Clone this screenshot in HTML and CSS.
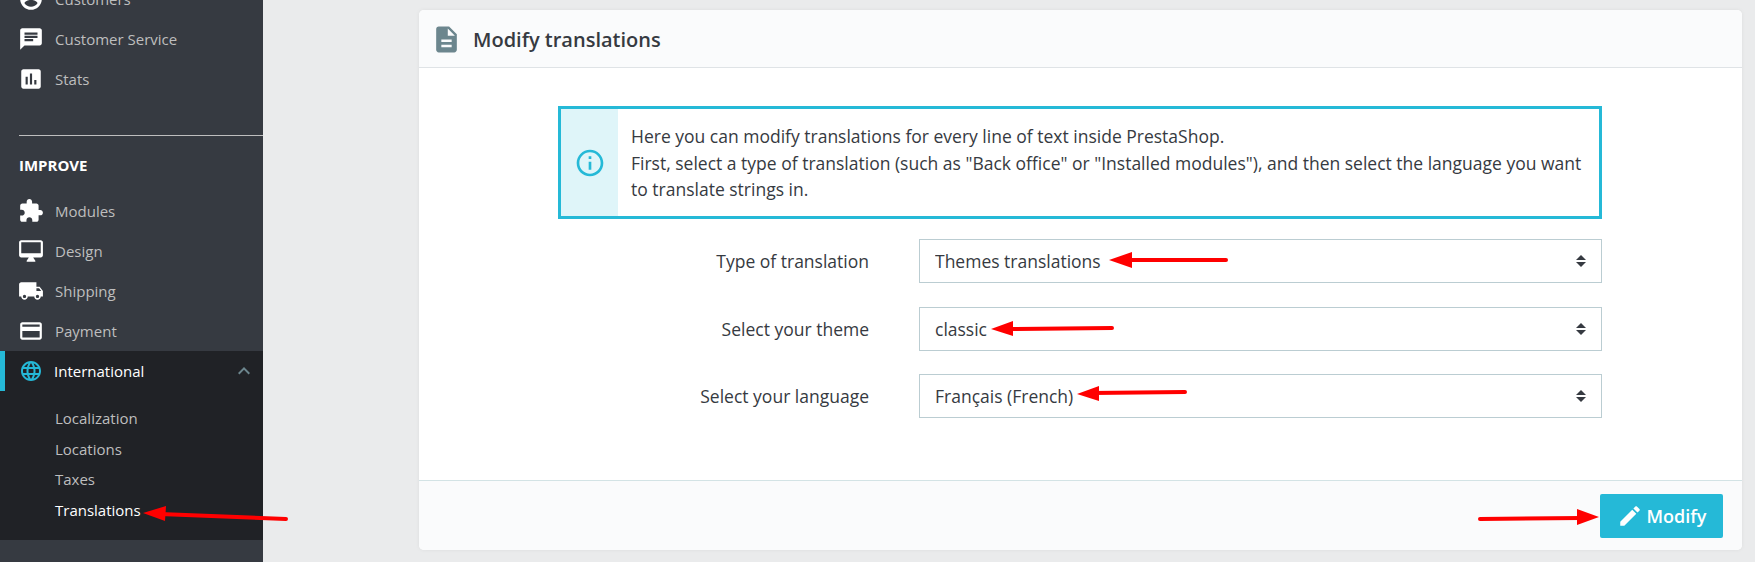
FILE: index.html
```html
<!DOCTYPE html>
<html lang="en">

<head>
    <meta charset="UTF-8">
    <meta name="viewport" content="width=device-width, initial-scale=1.0">
    <title>Modify translations</title>
    <link rel="stylesheet" href="styles.css">
</head>

<body>
    <div class="page">
        <nav class="sidebar">
            <ul class="menu">
                <li class="menu-item">
                    <svg class="menu-icon" viewBox="0 0 24 24"><path d="M12 2C6.48 2 2 6.48 2 12s4.48 10 10 10 10-4.48 10-10S17.52 2 12 2zm0 3c1.66 0 3 1.34 3 3s-1.34 3-3 3-3-1.34-3-3 1.34-3 3-3zm0 14.2c-2.5 0-4.71-1.28-6-3.22.03-1.99 4-3.08 6-3.08 1.99 0 5.97 1.09 6 3.08-1.29 1.94-3.5 3.22-6 3.22z"/></svg>
                    Customers
                </li>
                <li class="menu-item">
                    <svg class="menu-icon" viewBox="0 0 24 24"><path d="M20 2H4c-1.1 0-1.99.9-1.99 2L2 22l4-4h14c1.1 0 2-.9 2-2V4c0-1.1-.9-2-2-2zM6 9h12v2H6V9zm8 5H6v-2h8v2zm4-6H6V6h12v2z"/></svg>
                    Customer Service
                </li>
                <li class="menu-item">
                    <svg class="menu-icon" viewBox="0 0 24 24"><path d="M19 3H5c-1.1 0-2 .9-2 2v14c0 1.1.9 2 2 2h14c1.1 0 2-.9 2-2V5c0-1.1-.9-2-2-2zM9 17H7v-7h2v7zm4 0h-2V7h2v10zm4 0h-2v-4h2v4z"/></svg>
                    Stats
                </li>
            </ul>

            <div class="menu-section">IMPROVE</div>

            <ul class="menu">
                <li class="menu-item">
                    <svg class="menu-icon" viewBox="0 0 24 24"><path d="M20.5 11H19V7c0-1.1-.9-2-2-2h-4V3.5C13 2.12 11.88 1 10.5 1S8 2.12 8 3.5V5H4c-1.1 0-1.99.9-1.99 2v3.8H3.5c1.49 0 2.7 1.21 2.7 2.7s-1.21 2.7-2.7 2.7H2V20c0 1.1.9 2 2 2h3.8v-1.5c0-1.49 1.21-2.7 2.7-2.7 1.49 0 2.7 1.21 2.7 2.7V22H17c1.1 0 2-.9 2-2v-4h1.5c1.38 0 2.5-1.12 2.5-2.5S21.88 11 20.5 11z"/></svg>
                    Modules
                </li>
                <li class="menu-item">
                    <svg class="menu-icon" viewBox="0 0 24 24"><path d="M21 2H3c-1.1 0-2 .9-2 2v12c0 1.1.9 2 2 2h7l-2 3v1h8v-1l-2-3h7c1.1 0 2-.9 2-2V4c0-1.1-.9-2-2-2zm0 12H3V4h18v10z"/></svg>
                    Design
                </li>
                <li class="menu-item">
                    <svg class="menu-icon" viewBox="0 0 24 24"><path d="M20 8h-3V4H3c-1.1 0-2 .9-2 2v11h2c0 1.66 1.34 3 3 3s3-1.34 3-3h6c0 1.66 1.34 3 3 3s3-1.34 3-3h2v-5l-3-4zM6 18.5c-.83 0-1.5-.67-1.5-1.5s.67-1.5 1.5-1.5 1.5.67 1.5 1.5-.67 1.5-1.5 1.5zm13.5-9l1.96 2.5H17V9.5h2.5zm-1.5 9c-.83 0-1.5-.67-1.5-1.5s.67-1.5 1.5-1.5 1.5.67 1.5 1.5-.67 1.5-1.5 1.5z"/></svg>
                    Shipping
                </li>
                <li class="menu-item">
                    <svg class="menu-icon" viewBox="0 0 24 24"><path d="M20 4H4c-1.11 0-1.99.89-1.99 2L2 18c0 1.11.89 2 2 2h16c1.11 0 2-.89 2-2V6c0-1.11-.89-2-2-2zm0 14H4v-6h16v6zm0-10H4V6h16v2z"/></svg>
                    Payment
                </li>
                <li class="menu-item active">
                    <svg class="menu-icon" viewBox="0 0 24 24"><path d="M11.99 2C6.47 2 2 6.48 2 12s4.47 10 9.99 10C17.52 22 22 17.52 22 12S17.52 2 11.99 2zm6.93 6h-2.95c-.32-1.25-.78-2.45-1.38-3.56 1.84.63 3.37 1.91 4.33 3.56zM12 4.04c.83 1.2 1.48 2.53 1.91 3.96h-3.82c.43-1.43 1.08-2.76 1.91-3.96zM4.26 14C4.1 13.36 4 12.69 4 12s.1-1.36.26-2h3.38c-.08.66-.14 1.32-.14 2 0 .68.06 1.34.14 2H4.26zm.82 2h2.95c.32 1.25.78 2.45 1.38 3.56-1.84-.63-3.37-1.9-4.33-3.56zm2.95-8H5.08c.96-1.66 2.49-2.93 4.33-3.56C8.81 5.55 8.35 6.75 8.03 8zM12 19.96c-.83-1.2-1.48-2.53-1.91-3.96h3.82c-.43 1.43-1.08 2.76-1.91 3.96zM14.34 14H9.66c-.09-.66-.16-1.32-.16-2 0-.68.07-1.35.16-2h4.68c.09.65.16 1.32.16 2 0 .68-.07 1.34-.16 2zm.25 5.56c.6-1.11 1.06-2.31 1.38-3.56h2.95c-.96 1.65-2.49 2.93-4.33 3.56zM16.36 14c.08-.66.14-1.32.14-2 0-.68-.06-1.34-.14-2h3.38c.16.64.26 1.31.26 2s-.1 1.36-.26 2h-3.38z"/></svg>
                    International
                    <svg class="menu-caret" viewBox="0 0 24 24"><path d="M12 8l-6 6 1.41 1.41L12 10.83l4.59 4.58L18 14z"/></svg>
                </li>
            </ul>

            <ul class="submenu">
                <li>Localization</li>
                <li>Locations</li>
                <li>Taxes</li>
                <li class="current">Translations</li>
            </ul>
        </nav>

        <main class="content">
            <section class="card">
                <header class="card-header">
                    <svg class="card-icon" viewBox="0 0 24 24"><path d="M14 2H6c-1.1 0-1.99.9-1.99 2L4 20c0 1.1.89 2 1.99 2H18c1.1 0 2-.9 2-2V8l-6-6zm2 16H8v-2h8v2zm0-4H8v-2h8v2zm-3-5V3.5L18.5 9H13z"/></svg>
                    <h3>Modify translations</h3>
                </header>

                <div class="card-body">
                    <div class="alert">
                        <div class="alert-icon">
                            <svg viewBox="0 0 24 24"><path d="M11 7h2v2h-2zm0 4h2v6h-2zm1-9C6.48 2 2 6.48 2 12s4.48 10 10 10 10-4.48 10-10S17.52 2 12 2zm0 18c-4.41 0-8-3.59-8-8s3.59-8 8-8 8 3.59 8 8-3.59 8-8 8z"/></svg>
                        </div>
                        <p>Here you can modify translations for every line of text inside PrestaShop.<br>
                            First, select a type of translation (such as "Back office" or "Installed modules"), and then select the language you want to translate strings in.</p>
                    </div>

                    <div class="form-group">
                        <label for="type">Type of translation</label>
                        <div class="select-wrap">
                            <select id="type">
                                <option>Themes translations</option>
                            </select>
                        </div>
                    </div>

                    <div class="form-group">
                        <label for="theme">Select your theme</label>
                        <div class="select-wrap">
                            <select id="theme">
                                <option>classic</option>
                            </select>
                        </div>
                    </div>

                    <div class="form-group">
                        <label for="language">Select your language</label>
                        <div class="select-wrap">
                            <select id="language">
                                <option>Français (French)</option>
                            </select>
                        </div>
                    </div>
                </div>

                <footer class="card-footer">
                    <button type="button">
                        <svg viewBox="0 0 24 24"><path d="M3 17.25V21h3.75L17.81 9.94l-3.75-3.75L3 17.25zM20.71 7.04c.39-.39.39-1.02 0-1.41l-2.34-2.34c-.39-.39-1.02-.39-1.41 0l-1.83 1.83 3.75 3.75 1.83-1.83z"/></svg>
                        Modify
                    </button>
                </footer>
            </section>
        </main>

        <!-- red arrows drawn on top of the screenshot -->
        <svg class="arrows" viewBox="0 0 1755 562">
            <path class="arrow-line" d="M286 519 L160 514"/>
            <path class="arrow-head" d="M143 513 L166 506 L165 521 Z"/>
            <path class="arrow-line" d="M1226 260 L1125 260"/>
            <path class="arrow-head" d="M1109 260 L1132 252 L1132 268 Z"/>
            <path class="arrow-line" d="M1112 328 L1006 329"/>
            <path class="arrow-head" d="M991 329 L1013 321 L1013 336 Z"/>
            <path class="arrow-line" d="M1185 392 L1092 393"/>
            <path class="arrow-head" d="M1077 394 L1099 386 L1099 401 Z"/>
            <path class="arrow-line" d="M1480 519 L1581 518"/>
            <path class="arrow-head" d="M1599 517 L1577 509 L1577 525 Z"/>
        </svg>
    </div>
</body>

</html>
```

FILE: styles.css
```css
* {
    box-sizing: border-box;
}

html,
body {
    margin: 0;
    height: 100%;
    overflow: hidden;
}

body {
    font-family: "Open Sans", sans-serif;
    font-size: 17.5px;
    color: #363a41;
    background: #eaebec;
}

ul {
    list-style: none;
    margin: 0;
    padding: 0;
}

.page {
    position: relative;
    display: flex;
    height: 562px;
}

/* sidebar */
.sidebar {
    flex: 0 0 263px;
    height: 562px;
    overflow: hidden;
    background: #363a41;
    font-size: 15px;
    color: #bebebe;
}

.menu:first-child {
    margin-top: -21px;
}

.menu-item {
    display: flex;
    align-items: center;
    gap: 11px;
    height: 40px;
    padding-left: 18px;
}

.menu-icon {
    width: 26px;
    height: 26px;
    flex: none;
    fill: #fff;
}

.menu-section {
    margin: 36px 0 0 19px;
    padding: 18px 0 15px;
    border-top: 1px solid #bebebe;
    font-weight: 700;
    font-size: 15px;
    line-height: 22px;
    color: #fff;
}

.menu-item.active {
    gap: 12px;
    padding-left: 13px;
    border-left: 5px solid #25b9d7;
    background: #202226;
    color: #fff;
}

.menu-item.active .menu-icon {
    width: 24px;
    height: 24px;
    margin-left: 1px;
    margin-right: -1px;
    fill: #25b9d7;
}

.menu-caret {
    width: 24px;
    height: 24px;
    margin-left: auto;
    margin-right: 7px;
    fill: #6c868e;
}

.submenu {
    height: 149px;
    padding: 12px 0 0 55px;
    background: #202226;
    line-height: 30.5px;
}

.submenu .current {
    color: #fff;
}

/* main card */
.content {
    flex: 1;
    padding: 10px 13px 12px 156px;
}

.card {
    display: flex;
    flex-direction: column;
    height: 540px;
    background: #fff;
    border-radius: 5px;
    box-shadow: 0 0 4px 0 rgba(0, 0, 0, 0.06);
    overflow: hidden;
}

.card-header {
    display: flex;
    align-items: center;
    gap: 11px;
    height: 58px;
    flex: none;
    padding-left: 12px;
    background: #fafbfc;
    border-bottom: 1px solid #dfe3e6;
}

.card-header h3 {
    margin: 2px 0 0;
    font-size: 20px;
    font-weight: 600;
    color: #363a41;
}

.card-icon {
    width: 31px;
    height: 31px;
    margin-top: 1px;
    fill: #6c868e;
}

.card-body {
    flex: 1;
    padding: 38px 140px 0 139px;
}

.alert {
    display: flex;
    height: 113px;
    border: 3px solid #25b9d7;
    margin-bottom: 20px;
}

.alert-icon {
    display: flex;
    align-items: center;
    justify-content: center;
    flex: 0 0 57px;
    background: #dff5f9;
}

.alert-icon svg {
    width: 32px;
    height: 32px;
    fill: #25b9d7;
}

.alert p {
    margin: 0;
    padding: 14px 13px 0;
    line-height: 26.5px;
}

.form-group {
    display: grid;
    grid-template-columns: 311px 683px;
    column-gap: 50px;
    align-items: center;
    margin-bottom: 23.5px;
}

label {
    text-align: right;
}

.select-wrap {
    position: relative;
}

.select-wrap::before,
.select-wrap::after {
    content: "";
    position: absolute;
    right: 16px;
    border-left: 5px solid transparent;
    border-right: 5px solid transparent;
    pointer-events: none;
}

.select-wrap::before {
    top: 16px;
    border-bottom: 5px solid #363a41;
}

.select-wrap::after {
    top: 23px;
    border-top: 5px solid #363a41;
}

select {
    display: block;
    width: 100%;
    height: 44px;
    padding: 0 15px;
    font: inherit;
    color: #363a41;
    background: #fff;
    border: 1px solid #bbcdd2;
    border-radius: 0;
    appearance: none;
}

.card-footer {
    display: flex;
    justify-content: flex-end;
    align-items: flex-start;
    height: 70px;
    flex: none;
    padding: 13px 19px 0 0;
    background: #fafbfc;
    border-top: 1px solid #d3e3e5;
}

button {
    display: flex;
    align-items: center;
    justify-content: center;
    gap: 4px;
    width: 123px;
    height: 44px;
    padding: 0;
    font-family: inherit;
    font-size: 18px;
    font-weight: 600;
    color: #fff;
    background: #25b9d7;
    border: none;
    border-radius: 2px;
}

button svg {
    width: 26px;
    height: 26px;
    fill: #fff;
}

/* annotations */
.arrows {
    position: absolute;
    top: 0;
    left: 0;
    width: 1755px;
    height: 562px;
    pointer-events: none;
}

.arrow-line {
    fill: none;
    stroke: #f00;
    stroke-width: 4;
    stroke-linecap: round;
}

.arrow-head {
    fill: #f00;
}
```
